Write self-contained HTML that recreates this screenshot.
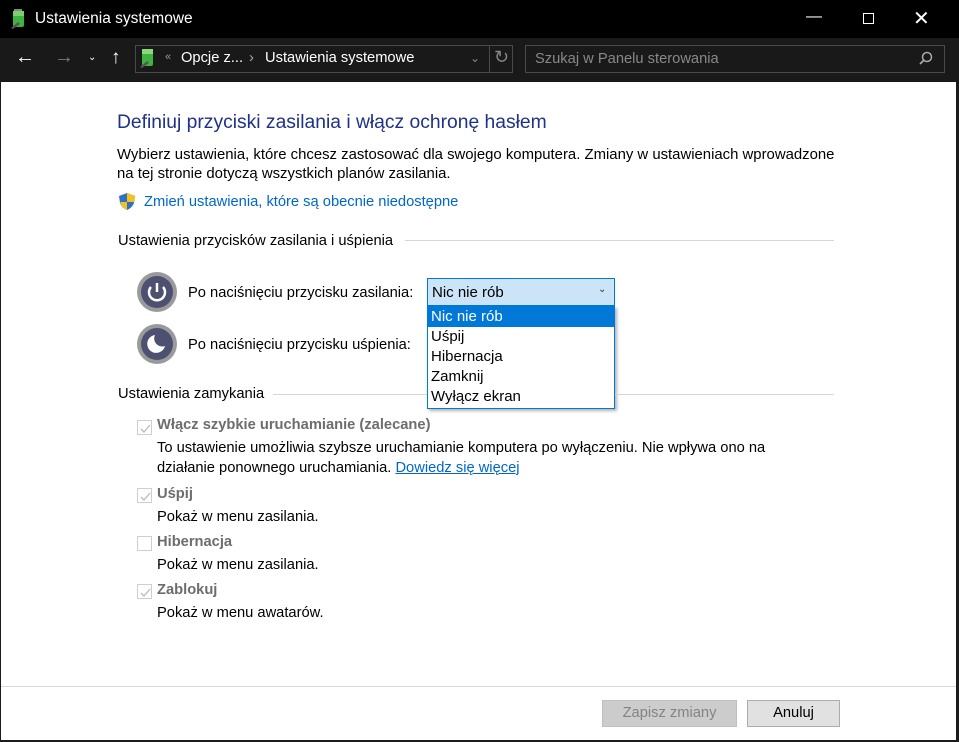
<!DOCTYPE html><html><head><meta charset="utf-8"><style>
*{margin:0;padding:0;box-sizing:border-box}
body{width:959px;height:742px;background:#1b1b1b;font-family:"Liberation Sans",sans-serif;font-size:14.7px;color:#000;position:relative;overflow:hidden}
.a{position:absolute;white-space:nowrap}
.w{color:#fff}
.g{color:#6d6d6d;font-weight:bold}
.cb{position:absolute;width:15px;height:15px;border:1px solid #cfcfcf;background:#fff}
.cb svg{position:absolute;left:1px;top:1px}
</style></head><body>
<div class="a" style="left:0;top:0;width:959px;height:38px;background:#000"></div>
<svg class="a" style="left:10px;top:8px" width="18" height="22" viewBox="0 0 18 22"><rect x="4" y="1" width="8" height="3" fill="#888"/><rect x="3" y="3" width="11" height="16" rx="2" fill="#3fb33f"/><rect x="3" y="3" width="11" height="5" fill="#7ad06a"/><path d="M1 20 L8 14 L10 16 L3 21Z" fill="#555"/></svg>
<div class="a w" style="left:35px;top:10px;font-size:15.5px">Ustawienia systemowe</div>
<div class="a w" style="left:806px;top:8px;font-size:16px">&#8212;</div>
<div class="a" style="left:863px;top:13px;width:11px;height:11px;border:1px solid #fff"></div>
<div class="a w" style="left:913px;top:6px;font-size:20px">&#10005;</div>
<div class="a" style="left:0;top:38px;width:959px;height:44px;background:#191919"></div>
<div class="a w" style="left:15px;top:46px;font-size:20px">&#8592;</div>
<div class="a" style="left:54px;top:46px;font-size:20px;color:#777">&#8594;</div>
<div class="a w" style="left:88px;top:52px;font-size:10px">&#8964;</div>
<div class="a w" style="left:111px;top:47px;font-size:19px">&#8593;</div>
<div class="a" style="left:135px;top:45px;width:378px;height:28px;border:1px solid #4a4a4a"></div>
<svg class="a" style="left:139px;top:48px" width="16" height="20" viewBox="0 0 16 20"><rect x="3" y="1" width="11" height="17" rx="2" fill="#3fb33f"/><rect x="3" y="1" width="11" height="5" fill="#8ad87a"/><path d="M1 19 L8 13 L10 15 L3 20Z" fill="#555"/></svg>
<div class="a" style="left:165px;top:51px;font-size:11px;color:#999">&#171;</div>
<div class="a w" style="left:181px;top:50px">Opcje z...</div>
<div class="a" style="left:249px;top:50px;color:#aaa">&#8250;</div>
<div class="a w" style="left:265px;top:50px">Ustawienia systemowe</div>
<div class="a" style="left:470px;top:51px;color:#888;font-size:12px">&#8964;</div>
<div class="a" style="left:489px;top:46px;width:1px;height:26px;background:#4a4a4a"></div>
<div class="a" style="left:494px;top:47px;color:#888;font-size:18px">&#8635;</div>
<div class="a" style="left:525px;top:45px;width:420px;height:28px;border:1px solid #4a4a4a"></div>
<div class="a" style="left:535px;top:51px;color:#888">Szukaj w Panelu sterowania</div>
<svg class="a" style="left:919px;top:51px" width="14" height="14"><circle cx="8" cy="6" r="4.5" fill="none" stroke="#aaa" stroke-width="1.5"/><path d="M5 9 L1 13" stroke="#aaa" stroke-width="1.8"/></svg>
<div class="a" style="left:1px;top:82px;width:955px;height:658px;background:#fff"></div>
<div class="a" style="left:117px;top:112px;font-size:19.3px;color:#1e3287">Definiuj przyciski zasilania i włącz ochronę hasłem</div>
<div class="a" style="left:117px;top:147px;font-size:14.9px">Wybierz ustawienia, które chcesz zastosować dla swojego komputera. Zmiany w ustawieniach wprowadzone</div>
<div class="a" style="left:117px;top:166px;font-size:14.9px">na tej stronie dotyczą wszystkich planów zasilania.</div>
<svg class="a" style="left:118px;top:192px" width="18" height="19" viewBox="0 0 18 19"><path d="M9 1 L17 4 L16 11 Q14 16 9 18 Q4 16 2 11 L1 4Z" fill="#2f6fc6"/><path d="M9 1 L17 4 L16 10 L9 10Z" fill="#f4c21d"/><path d="M9 10 L2 10 Q4 16 9 18Z" fill="#f4c21d"/></svg>
<div class="a" style="left:144px;top:194px;color:#0066cc">Zmień ustawienia, które są obecnie niedostępne</div>
<div class="a" style="left:118px;top:233px">Ustawienia przycisków zasilania i uśpienia</div>
<div class="a" style="left:405px;top:240px;width:429px;height:1px;background:#d6d6d6"></div>
<svg class="a" style="left:136px;top:271px" width="42" height="42"><circle cx="21" cy="21" r="20" fill="#9a9a9a"/><circle cx="21" cy="21" r="16" fill="#4d5070"/><path d="M15 16 A8 8 0 1 0 27 16" fill="none" stroke="#fff" stroke-width="2.5"/><path d="M21 12 V21" stroke="#fff" stroke-width="2.5"/></svg>
<div class="a" style="left:188px;top:285px">Po naciśnięciu przycisku zasilania:</div>
<svg class="a" style="left:136px;top:323px" width="42" height="42"><circle cx="21" cy="21" r="20" fill="#9a9a9a"/><circle cx="21" cy="21" r="16" fill="#4d5070"/><path d="M19 12 A9 9 0 1 0 29 23 A8 8 0 0 1 19 12Z" fill="#fff"/></svg>
<div class="a" style="left:188px;top:337px">Po naciśnięciu przycisku uśpienia:</div>
<div class="a" style="left:427px;top:278px;width:188px;height:28px;background:#cce4f7;border:1px solid #0078d7"></div>
<div class="a" style="left:432px;top:284px;font-size:15px">Nic nie rób</div>
<div class="a" style="left:598px;top:284px;font-size:10px;color:#333">&#8964;</div>
<div class="a" style="left:427px;top:306px;width:188px;height:103px;background:#fff;border:1px solid #0078d7;box-shadow:2px 2px 3px rgba(0,0,0,.3)"></div>
<div class="a" style="left:428px;top:307px;width:186px;height:20px;background:#0078d7"></div>
<div class="a" style="left:431px;top:308px;font-size:15px;color:#fff">Nic nie rób</div>
<div class="a" style="left:431px;top:328px;font-size:15px">Uśpij</div>
<div class="a" style="left:431px;top:348px;font-size:15px">Hibernacja</div>
<div class="a" style="left:431px;top:368px;font-size:15px">Zamknij</div>
<div class="a" style="left:431px;top:388px;font-size:15px">Wyłącz ekran</div>
<div class="a" style="left:118px;top:386px">Ustawienia zamykania</div>
<div class="a" style="left:273px;top:394px;width:154px;height:1px;background:#d6d6d6"></div>
<div class="a" style="left:615px;top:394px;width:219px;height:1px;background:#d6d6d6"></div>
<div class="cb" style="left:137px;top:420px"><svg width="13" height="13"><path d="M2 7 L5 10 L11 3" fill="none" stroke="#bbb" stroke-width="1.3"/></svg></div>
<div class="a g" style="left:157px;top:417px">Włącz szybkie uruchamianie (zalecane)</div>
<div class="a" style="left:157px;top:440px">To ustawienie umożliwia szybsze uruchamianie komputera po wyłączeniu. Nie wpływa ono na</div>
<div class="a" style="left:157px;top:460px">działanie ponownego uruchamiania. <span style="color:#0066cc;text-decoration:underline">Dowiedz się więcej</span></div>
<div class="cb" style="left:137px;top:488px"><svg width="13" height="13"><path d="M2 7 L5 10 L11 3" fill="none" stroke="#bbb" stroke-width="1.3"/></svg></div>
<div class="a g" style="left:157px;top:486px">Uśpij</div>
<div class="a" style="left:157px;top:509px">Pokaż w menu zasilania.</div>
<div class="cb" style="left:137px;top:536px"></div>
<div class="a g" style="left:157px;top:534px">Hibernacja</div>
<div class="a" style="left:157px;top:557px">Pokaż w menu zasilania.</div>
<div class="cb" style="left:137px;top:584px"><svg width="13" height="13"><path d="M2 7 L5 10 L11 3" fill="none" stroke="#bbb" stroke-width="1.3"/></svg></div>
<div class="a g" style="left:157px;top:582px">Zablokuj</div>
<div class="a" style="left:157px;top:605px">Pokaż w menu awatarów.</div>
<div class="a" style="left:1px;top:686px;width:955px;height:1px;background:#d9d9d9"></div>
<div class="a" style="left:602px;top:700px;width:135px;height:27px;background:#cccccc;border:1px solid #bfbfbf;color:#838383;text-align:center;line-height:25px">Zapisz zmiany</div>
<div class="a" style="left:747px;top:700px;width:93px;height:27px;background:#e1e1e1;border:1px solid #adadad;text-align:center;line-height:25px">Anuluj</div>
</body></html>
